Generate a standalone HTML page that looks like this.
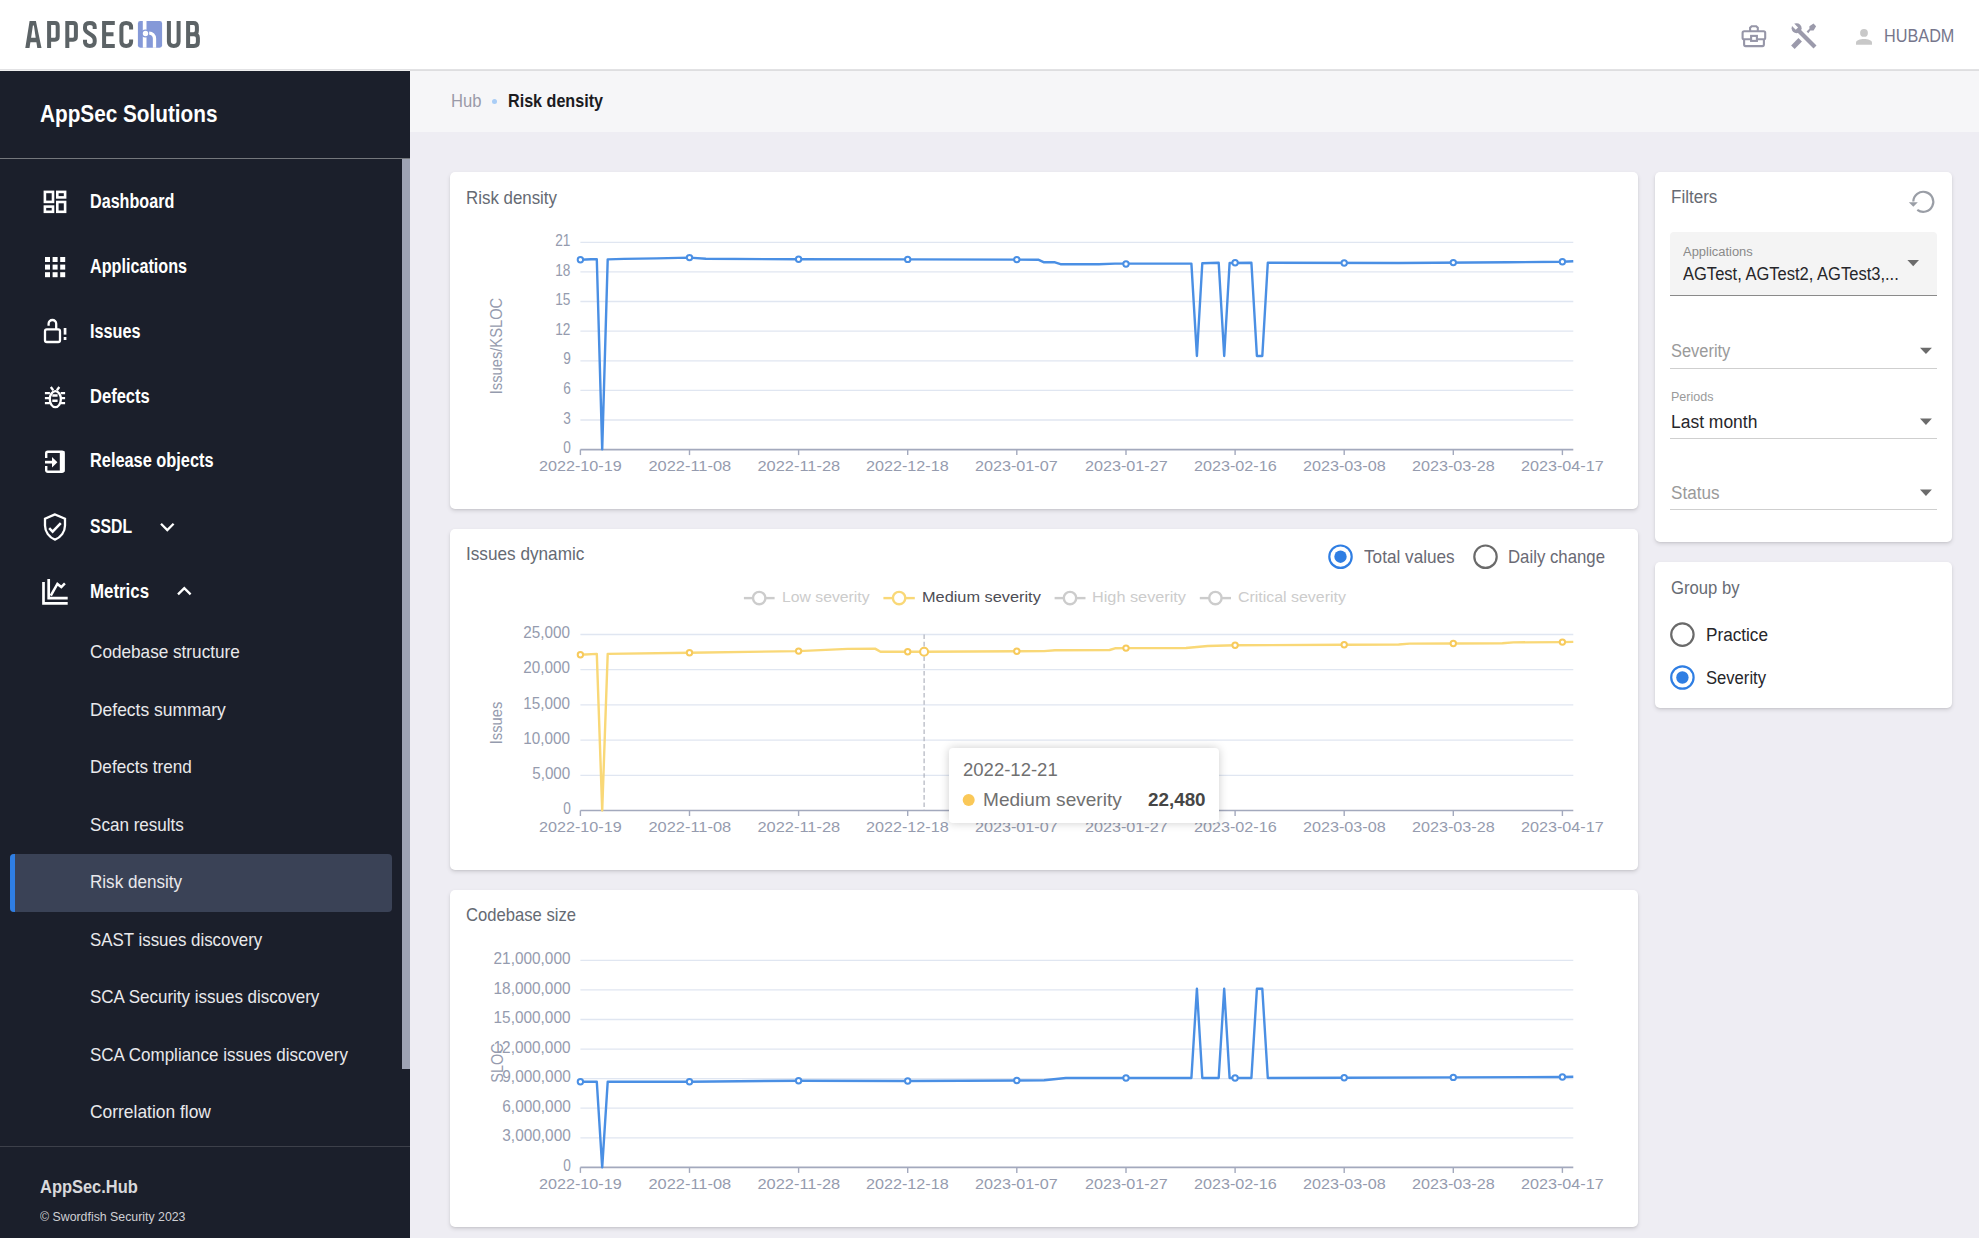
<!DOCTYPE html>
<html><head><meta charset="utf-8"><title>Risk density</title>
<style>
html,body{margin:0;padding:0;width:1979px;height:1238px;overflow:hidden;background:#eeedf3;font-family:"Liberation Sans",sans-serif;}
.abs{position:absolute;}
.t{position:absolute;white-space:pre;line-height:1;font-family:"Liberation Sans",sans-serif;}
#header{position:absolute;left:0;top:0;width:1979px;height:69px;background:#fff;border-bottom:1px solid #e2e2e4;}
#hshadow{position:absolute;left:410px;top:70px;width:1569px;height:1px;background:#dedee0;}
#hshadow2{position:absolute;left:0;top:70px;width:410px;height:1px;background:#efeff0;}
#sidebar{position:absolute;left:0;top:71px;width:410px;height:1167px;background:#1b1f2b;}
#crumb{position:absolute;left:410px;top:71px;width:1569px;height:61px;background:#f6f6f8;}
.card{position:absolute;background:#fff;border-radius:5px;box-shadow:0 2px 4px 0 rgba(0,0,0,.12),0 1px 2px 0 rgba(0,0,0,.06);}
svg{position:absolute;left:0;top:0;overflow:visible;}
</style></head>
<body>
<div id="header"></div>
<div id="hshadow"></div><div id="hshadow2"></div>
<div id="sidebar"></div>
<!-- sidebar header divider -->
<div class="abs" style="left:0;top:158px;width:410px;height:1px;background:#74777c"></div>
<!-- scrollbar -->
<div class="abs" style="left:402px;top:159px;width:8px;height:910px;background:#9ea3b4"></div>
<!-- active item -->
<div class="abs" style="left:10px;top:854px;width:382px;height:58px;background:#3a4256;border-radius:4px;overflow:hidden"><div style="position:absolute;left:0;top:0;width:5px;height:58px;background:#2f7ee3"></div></div>
<!-- footer divider -->
<div class="abs" style="left:0;top:1146px;width:410px;height:1px;background:#3d404a"></div>
<div id="crumb"></div>
<div class="abs" style="left:492px;top:98.8px;width:5.2px;height:5.2px;border-radius:50%;background:#a9cdf6"></div>

<!-- cards -->
<div class="card" style="left:450px;top:172px;width:1188px;height:337px"></div>
<div class="card" style="left:450px;top:529px;width:1188px;height:341px"></div>
<div class="card" style="left:450px;top:890px;width:1188px;height:337px"></div>
<div class="card" style="left:1655px;top:172px;width:297px;height:370px"></div>
<div class="card" style="left:1655px;top:562px;width:297px;height:146px"></div>

<!-- filters inputs -->
<div class="abs" style="left:1670px;top:232px;width:267px;height:63px;background:#f4f4f4;border-radius:4px 4px 0 0;border-bottom:1px solid #8a8a8a"></div>
<div class="abs" style="left:1670px;top:368px;width:267px;height:1px;background:#cfcfcf"></div>
<div class="abs" style="left:1670px;top:438px;width:267px;height:1px;background:#cfcfcf"></div>
<div class="abs" style="left:1670px;top:509px;width:267px;height:1px;background:#cfcfcf"></div>

<svg width="1979" height="1238" viewBox="0 0 1979 1238">
<!-- logo -->
<g fill="none" stroke="#5c6366" stroke-width="4" stroke-linejoin="miter">
  <path d="M49.1,48 V23.1 H55 Q57.7,23.1 57.7,26 V36.6 Q57.7,39.7 55,39.7 H49.1"/>
  <path d="M67.3,48 V23.1 H73.2 Q75.9,23.1 75.9,26 V36.6 Q75.9,39.7 73.2,39.7 H67.3"/>
  <path d="M94.7,29 V27 Q94.7,23.1 89.9,23.1 Q85,23.1 85,27 V28.5 Q85,31 88,32.8 L91.8,35.2 Q94.7,37 94.7,40 V41.8 Q94.7,45.9 89.9,45.9 Q85,45.9 85,41.8 V39.8"/>
  <path d="M114.8,23.1 H104.1 V45.9 H114.8 M104.1,34.3 H113.5"/>
  <path d="M131.1,29.5 V27.5 Q131.1,23.1 126.2,23.1 Q121.4,23.1 121.4,27.5 V41.5 Q121.4,45.9 126.2,45.9 Q131.1,45.9 131.1,41.5 V39.5"/>
  <path d="M168.9,21 V41.5 Q168.9,45.9 173.8,45.9 Q178.6,45.9 178.6,41.5 V21"/>
  <path d="M188.1,48 V23.1 H193.5 Q196.9,23.1 196.9,26.8 V30.5 Q196.9,34.2 193.5,34.2 H188.1 M188.1,34.2 H194 Q197.9,34.2 197.9,38 V42 Q197.9,45.9 194,45.9 H188.1"/>
</g>
<path fill="#5c6366" fill-rule="evenodd" d="M25.3,48 L29.6,21 L35.9,21 L41.5,48 L37.3,48 L36.4,42.3 L30.4,42.3 L29.5,48 Z M31.1,37.8 L35.7,37.8 L33.9,25.6 L32.9,25.6 Z"/>
<rect x="137.9" y="21" width="24.2" height="26.7" rx="2.4" fill="#8599d8"/>
<rect x="142.8" y="21" width="3.7" height="26.7" fill="#fff"/>
<circle cx="145.5" cy="33.5" r="4.1" fill="#8599d8"/>
<circle cx="145.5" cy="33.5" r="2.7" fill="#fff"/>
<path d="M149.2,33.1 A5.3 5.3 0 0 1 154.5,38.4 V47.7" fill="none" stroke="#fff" stroke-width="3.3"/>
<!-- header icons -->
<g fill="none" stroke="#9696a8" stroke-width="2.1">
  <rect x="1742.6" y="31.2" width="22.6" height="8.1" rx="1.6"/>
  <path d="M1744.1 39.3V44.6a1.5 1.5 0 0 0 1.5 1.5H1762.4a1.5 1.5 0 0 0 1.5-1.5V39.3"/>
  <path d="M1750.1 31.2V27.8L1751.7 26.2H1756.2L1757.8 27.8V31.2"/>
  <rect x="1751.1" y="35.9" width="5.8" height="5" fill="#fff"/>
</g>
<g fill="#9b9aab">
  <line x1="1799" y1="31" x2="1815" y2="47" stroke="#9b9aab" stroke-width="4.2"/>
  <circle cx="1796.6" cy="28.3" r="5"/>
  <line x1="1796.9" y1="28.6" x2="1791" y2="22.7" stroke="#fff" stroke-width="3.3"/>
  <line x1="1792.9" y1="47.2" x2="1800.2" y2="39.8" stroke="#9b9aab" stroke-width="4.9"/>
  <path d="M1806.6,31.6 L1809.4,28.8 L1809.4,26.2 L1813.5,23.6 L1816.1,26.2 L1813.6,30.5 L1810.3,30.6 L1808.3,33.3 Z"/>
</g>
<!-- person -->
<circle cx="1864" cy="32.9" r="3.9" fill="#c8c8c8"/>
<path d="M1856 44.8v-2.2c0-2.2 4-3.6 8-3.6s8 1.4 8 3.6v2.2z" fill="#c8c8c8"/>

<!-- sidebar icons -->
<g fill="none" stroke="#fff" stroke-width="2.6">
  <rect x="44.9" y="191.9" width="8.1" height="10" />
  <rect x="57.3" y="191.9" width="7.8" height="5.5" />
  <rect x="44.9" y="206.6" width="8.1" height="5.2" />
  <rect x="57.3" y="202" width="7.8" height="9.8" />
</g>
<g fill="#fff">
  <rect x="45" y="257" width="5" height="5"/><rect x="52.6" y="257" width="5" height="5"/><rect x="60.2" y="257" width="5" height="5"/>
  <rect x="45" y="264.6" width="5" height="5"/><rect x="52.6" y="264.6" width="5" height="5"/><rect x="60.2" y="264.6" width="5" height="5"/>
  <rect x="45" y="272.2" width="5" height="5"/><rect x="52.6" y="272.2" width="5" height="5"/><rect x="60.2" y="272.2" width="5" height="5"/>
</g>
<!-- issues lock -->
<g fill="none" stroke="#fff" stroke-width="2.3">
  <rect x="45" y="329.4" width="15" height="12.6" rx="1.8"/>
  <path d="M48.6 325.8v-2a3.8 3.8 0 0 1 7.6 0v5.6"/>
</g>
<rect x="63.7" y="328" width="2.7" height="6.6" fill="#fff"/>
<rect x="63.7" y="337" width="2.7" height="3" fill="#fff"/>
<!-- bug -->
<g fill="none" stroke="#fff" stroke-width="2.3">
  <ellipse cx="55.35" cy="399.15" rx="5.5" ry="8"/>
  <path d="M44.9 393.1h5M60.7 393.1h4.4M44.9 398.2h5M60.7 398.2h4.4M44.9 403.2h5M60.7 403.2h4.4M50.8 387l2.4 3.2M59.3 387l-2.4 3.2"/>
  <path d="M52.3 395.5h5.3M52.3 400.8h5.3" stroke-width="2.6"/>
</g>
<!-- release objects -->
<g fill="none" stroke="#fff" stroke-width="2.4">
  <path d="M46.2 458.1v-4.7a1.6 1.6 0 0 1 1.6-1.6h14.2a1.6 1.6 0 0 1 1.6 1.6v16.8a1.6 1.6 0 0 1-1.6 1.6H47.8a1.6 1.6 0 0 1-1.6-1.6v-4.3"/>
</g>
<rect x="59.8" y="451" width="4.6" height="21" fill="#fff"/>
<rect x="45" y="460.8" width="8" height="2.7" fill="#fff"/>
<path d="M52 456.9L57.4 462.2L52 467.5Z" fill="#fff"/>
<!-- shield -->
<g fill="none" stroke="#fff" stroke-width="2.3">
  <path d="M55 514.4L45 518.8v6.6c0 6.4 4.2 12.2 10 14.2c5.8-2 10-7.8 10-14.2v-6.6z"/>
  <path d="M49.2 528.2l3.4 3.4l8.2-8.4" stroke-width="2.5"/>
</g>
<!-- metrics -->
<g fill="none" stroke="#fff" stroke-width="2.7">
  <path d="M43.5 582v21.3h24.2"/>
  <path d="M48.7 579.1v19.1h19"/>
  <path d="M50.8 595.6l6.6-11.6l3.9 3.1l3.6-3.7" stroke-width="2.5"/>
</g>
<!-- chevrons -->
<g fill="none" stroke="#fff" stroke-width="2.3">
  <path d="M161 523.8l6.3 6.3l6.3-6.3"/>
  <path d="M178 594.4l6.3-6.3l6.3 6.3"/>
</g>

<!-- filter icons -->
<g fill="none" stroke="#9a9ea6" stroke-width="2.2">
  <path d="M1917.3 209.8A10 10 0 1 0 1913.3 201.5"/>
</g>
<path d="M1908.8 202.3h9l-4.5 4.5z" fill="#9a9ea6"/>
<g fill="#6b6b6b">
  <path d="M1907.4 259.9h11.6l-5.8 6.3z"/>
  <path d="M1920 347.8h11.9l-5.95 6.2z"/>
  <path d="M1920 418.5h11.9l-5.95 6.5z"/>
  <path d="M1920 489.6h11.9l-5.95 6.4z"/>
</g>
<!-- radios -->
<circle cx="1682.4" cy="634.6" r="11.2" fill="none" stroke="#6a6a6a" stroke-width="2.2"/>
<circle cx="1682.4" cy="677.5" r="11.2" fill="none" stroke="#2f7ee3" stroke-width="2.2"/>
<circle cx="1682.4" cy="677.5" r="6.2" fill="#2f7ee3"/>
<circle cx="1340.5" cy="556.7" r="11.2" fill="none" stroke="#2f7ee3" stroke-width="2.2"/>
<circle cx="1340.5" cy="556.7" r="6.2" fill="#2f7ee3"/>
<circle cx="1485.5" cy="556.7" r="11.2" fill="none" stroke="#6a6a6a" stroke-width="2.2"/>

<line x1="580.4" y1="242.3" x2="1573.3" y2="242.3" stroke="#e0e6f1" stroke-width="1.3"/>
<line x1="580.4" y1="271.9" x2="1573.3" y2="271.9" stroke="#e0e6f1" stroke-width="1.3"/>
<line x1="580.4" y1="301.5" x2="1573.3" y2="301.5" stroke="#e0e6f1" stroke-width="1.3"/>
<line x1="580.4" y1="331.1" x2="1573.3" y2="331.1" stroke="#e0e6f1" stroke-width="1.3"/>
<line x1="580.4" y1="360.8" x2="1573.3" y2="360.8" stroke="#e0e6f1" stroke-width="1.3"/>
<line x1="580.4" y1="390.4" x2="1573.3" y2="390.4" stroke="#e0e6f1" stroke-width="1.3"/>
<line x1="580.4" y1="420.0" x2="1573.3" y2="420.0" stroke="#e0e6f1" stroke-width="1.3"/>
<line x1="580.4" y1="449.6" x2="1573.3" y2="449.6" stroke="#a3a9bd" stroke-width="1.6"/>
<line x1="580.4" y1="449.6" x2="580.4" y2="455.1" stroke="#a3a9bd" stroke-width="1.4"/>
<line x1="689.5" y1="449.6" x2="689.5" y2="455.1" stroke="#a3a9bd" stroke-width="1.4"/>
<line x1="798.6" y1="449.6" x2="798.6" y2="455.1" stroke="#a3a9bd" stroke-width="1.4"/>
<line x1="907.7" y1="449.6" x2="907.7" y2="455.1" stroke="#a3a9bd" stroke-width="1.4"/>
<line x1="1016.8" y1="449.6" x2="1016.8" y2="455.1" stroke="#a3a9bd" stroke-width="1.4"/>
<line x1="1126.0" y1="449.6" x2="1126.0" y2="455.1" stroke="#a3a9bd" stroke-width="1.4"/>
<line x1="1235.1" y1="449.6" x2="1235.1" y2="455.1" stroke="#a3a9bd" stroke-width="1.4"/>
<line x1="1344.2" y1="449.6" x2="1344.2" y2="455.1" stroke="#a3a9bd" stroke-width="1.4"/>
<line x1="1453.3" y1="449.6" x2="1453.3" y2="455.1" stroke="#a3a9bd" stroke-width="1.4"/>
<line x1="1562.4" y1="449.6" x2="1562.4" y2="455.1" stroke="#a3a9bd" stroke-width="1.4"/>
<line x1="580.4" y1="634.5" x2="1573.3" y2="634.5" stroke="#e0e6f1" stroke-width="1.3"/>
<line x1="580.4" y1="669.7" x2="1573.3" y2="669.7" stroke="#e0e6f1" stroke-width="1.3"/>
<line x1="580.4" y1="704.9" x2="1573.3" y2="704.9" stroke="#e0e6f1" stroke-width="1.3"/>
<line x1="580.4" y1="740.1" x2="1573.3" y2="740.1" stroke="#e0e6f1" stroke-width="1.3"/>
<line x1="580.4" y1="775.3" x2="1573.3" y2="775.3" stroke="#e0e6f1" stroke-width="1.3"/>
<line x1="580.4" y1="810.5" x2="1573.3" y2="810.5" stroke="#a3a9bd" stroke-width="1.6"/>
<line x1="580.4" y1="810.5" x2="580.4" y2="816.0" stroke="#a3a9bd" stroke-width="1.4"/>
<line x1="689.5" y1="810.5" x2="689.5" y2="816.0" stroke="#a3a9bd" stroke-width="1.4"/>
<line x1="798.6" y1="810.5" x2="798.6" y2="816.0" stroke="#a3a9bd" stroke-width="1.4"/>
<line x1="907.7" y1="810.5" x2="907.7" y2="816.0" stroke="#a3a9bd" stroke-width="1.4"/>
<line x1="1016.8" y1="810.5" x2="1016.8" y2="816.0" stroke="#a3a9bd" stroke-width="1.4"/>
<line x1="1126.0" y1="810.5" x2="1126.0" y2="816.0" stroke="#a3a9bd" stroke-width="1.4"/>
<line x1="1235.1" y1="810.5" x2="1235.1" y2="816.0" stroke="#a3a9bd" stroke-width="1.4"/>
<line x1="1344.2" y1="810.5" x2="1344.2" y2="816.0" stroke="#a3a9bd" stroke-width="1.4"/>
<line x1="1453.3" y1="810.5" x2="1453.3" y2="816.0" stroke="#a3a9bd" stroke-width="1.4"/>
<line x1="1562.4" y1="810.5" x2="1562.4" y2="816.0" stroke="#a3a9bd" stroke-width="1.4"/>
<line x1="580.4" y1="960.3" x2="1573.3" y2="960.3" stroke="#e0e6f1" stroke-width="1.3"/>
<line x1="580.4" y1="989.9" x2="1573.3" y2="989.9" stroke="#e0e6f1" stroke-width="1.3"/>
<line x1="580.4" y1="1019.5" x2="1573.3" y2="1019.5" stroke="#e0e6f1" stroke-width="1.3"/>
<line x1="580.4" y1="1049.1" x2="1573.3" y2="1049.1" stroke="#e0e6f1" stroke-width="1.3"/>
<line x1="580.4" y1="1078.6" x2="1573.3" y2="1078.6" stroke="#e0e6f1" stroke-width="1.3"/>
<line x1="580.4" y1="1108.2" x2="1573.3" y2="1108.2" stroke="#e0e6f1" stroke-width="1.3"/>
<line x1="580.4" y1="1137.8" x2="1573.3" y2="1137.8" stroke="#e0e6f1" stroke-width="1.3"/>
<line x1="580.4" y1="1167.4" x2="1573.3" y2="1167.4" stroke="#a3a9bd" stroke-width="1.6"/>
<line x1="580.4" y1="1167.4" x2="580.4" y2="1172.9" stroke="#a3a9bd" stroke-width="1.4"/>
<line x1="689.5" y1="1167.4" x2="689.5" y2="1172.9" stroke="#a3a9bd" stroke-width="1.4"/>
<line x1="798.6" y1="1167.4" x2="798.6" y2="1172.9" stroke="#a3a9bd" stroke-width="1.4"/>
<line x1="907.7" y1="1167.4" x2="907.7" y2="1172.9" stroke="#a3a9bd" stroke-width="1.4"/>
<line x1="1016.8" y1="1167.4" x2="1016.8" y2="1172.9" stroke="#a3a9bd" stroke-width="1.4"/>
<line x1="1126.0" y1="1167.4" x2="1126.0" y2="1172.9" stroke="#a3a9bd" stroke-width="1.4"/>
<line x1="1235.1" y1="1167.4" x2="1235.1" y2="1172.9" stroke="#a3a9bd" stroke-width="1.4"/>
<line x1="1344.2" y1="1167.4" x2="1344.2" y2="1172.9" stroke="#a3a9bd" stroke-width="1.4"/>
<line x1="1453.3" y1="1167.4" x2="1453.3" y2="1172.9" stroke="#a3a9bd" stroke-width="1.4"/>
<line x1="1562.4" y1="1167.4" x2="1562.4" y2="1172.9" stroke="#a3a9bd" stroke-width="1.4"/>
<polyline points="580.4,259.7 591.3,259.2 596.8,259.2 602.2,449.4 607.7,259.4 624.0,258.9 656.8,258.4 689.5,257.6 705.9,258.8 798.6,259.3 907.7,259.4 1016.8,259.6 1038.7,259.8 1044.1,262.3 1055.0,262.3 1060.5,264.2 1098.7,264.3 1115.0,263.6 1191.4,263.6 1196.9,356.0 1202.3,263.2 1218.7,262.8 1224.2,356.0 1229.6,263.0 1251.4,262.8 1256.9,356.0 1262.3,356.0 1267.8,262.8 1398.7,263.0 1507.8,262.3 1562.4,261.8 1573.3,261.2" fill="none" stroke="#4a8fe4" stroke-width="2.4" stroke-linejoin="round"/>
<circle cx="580.4" cy="259.7" r="2.7" fill="#fff" stroke="#4a8fe4" stroke-width="2"/>
<circle cx="689.5" cy="257.6" r="2.7" fill="#fff" stroke="#4a8fe4" stroke-width="2"/>
<circle cx="798.6" cy="259.3" r="2.7" fill="#fff" stroke="#4a8fe4" stroke-width="2"/>
<circle cx="907.7" cy="259.4" r="2.7" fill="#fff" stroke="#4a8fe4" stroke-width="2"/>
<circle cx="1016.8" cy="259.6" r="2.7" fill="#fff" stroke="#4a8fe4" stroke-width="2"/>
<circle cx="1126.0" cy="264.0" r="2.7" fill="#fff" stroke="#4a8fe4" stroke-width="2"/>
<circle cx="1235.1" cy="262.8" r="2.7" fill="#fff" stroke="#4a8fe4" stroke-width="2"/>
<circle cx="1344.2" cy="263.0" r="2.7" fill="#fff" stroke="#4a8fe4" stroke-width="2"/>
<circle cx="1453.3" cy="262.6" r="2.7" fill="#fff" stroke="#4a8fe4" stroke-width="2"/>
<circle cx="1562.4" cy="261.8" r="2.7" fill="#fff" stroke="#4a8fe4" stroke-width="2"/>
<polyline points="580.4,654.8 596.8,653.9 602.2,810.5 607.7,653.9 689.5,652.7 798.6,651.1 847.7,648.9 875.0,648.6 880.5,651.8 907.7,651.8 924.1,651.8 1016.8,651.2 1044.1,651.1 1055.0,650.2 1109.6,650.0 1115.0,648.3 1126.0,648.1 1186.0,648.0 1202.3,646.5 1207.8,646.0 1235.1,645.3 1344.2,644.7 1398.7,644.5 1409.6,643.6 1453.3,643.5 1502.4,643.3 1513.3,642.4 1562.4,642.1 1573.3,641.9" fill="none" stroke="#f9d877" stroke-width="2.4" stroke-linejoin="round"/>
<circle cx="580.4" cy="654.8" r="2.7" fill="#fff" stroke="#f7ca5c" stroke-width="2"/>
<circle cx="689.5" cy="652.7" r="2.7" fill="#fff" stroke="#f7ca5c" stroke-width="2"/>
<circle cx="798.6" cy="651.1" r="2.7" fill="#fff" stroke="#f7ca5c" stroke-width="2"/>
<circle cx="907.7" cy="651.8" r="2.7" fill="#fff" stroke="#f7ca5c" stroke-width="2"/>
<circle cx="1016.8" cy="651.2" r="2.7" fill="#fff" stroke="#f7ca5c" stroke-width="2"/>
<circle cx="1126.0" cy="648.1" r="2.7" fill="#fff" stroke="#f7ca5c" stroke-width="2"/>
<circle cx="1235.1" cy="645.3" r="2.7" fill="#fff" stroke="#f7ca5c" stroke-width="2"/>
<circle cx="1344.2" cy="644.7" r="2.7" fill="#fff" stroke="#f7ca5c" stroke-width="2"/>
<circle cx="1453.3" cy="643.5" r="2.7" fill="#fff" stroke="#f7ca5c" stroke-width="2"/>
<circle cx="1562.4" cy="642.1" r="2.7" fill="#fff" stroke="#f7ca5c" stroke-width="2"/>
<line x1="924.1" y1="634.5" x2="924.1" y2="810.5" stroke="#a9adb9" stroke-width="1.1" stroke-dasharray="4.6,2.7"/>
<circle cx="924.1" cy="651.8" r="4" fill="#fff" stroke="#f7ca5c" stroke-width="2.1"/>
<polyline points="580.4,1081.8 596.8,1081.8 602.2,1167.4 607.7,1081.8 689.5,1081.8 798.6,1080.7 907.7,1081.0 1016.8,1080.5 1044.1,1080.2 1065.9,1078.0 1126.0,1078.0 1191.4,1078.0 1196.9,988.8 1202.3,1078.0 1218.7,1078.0 1224.2,988.8 1229.6,1078.0 1251.4,1078.0 1256.9,988.8 1262.3,988.8 1267.8,1078.0 1344.2,1077.8 1453.3,1077.4 1562.4,1077.0 1573.3,1076.8" fill="none" stroke="#4a8fe4" stroke-width="2.4" stroke-linejoin="round"/>
<circle cx="580.4" cy="1081.8" r="2.7" fill="#fff" stroke="#4a8fe4" stroke-width="2"/>
<circle cx="689.5" cy="1081.8" r="2.7" fill="#fff" stroke="#4a8fe4" stroke-width="2"/>
<circle cx="798.6" cy="1080.7" r="2.7" fill="#fff" stroke="#4a8fe4" stroke-width="2"/>
<circle cx="907.7" cy="1081.0" r="2.7" fill="#fff" stroke="#4a8fe4" stroke-width="2"/>
<circle cx="1016.8" cy="1080.5" r="2.7" fill="#fff" stroke="#4a8fe4" stroke-width="2"/>
<circle cx="1126.0" cy="1078.0" r="2.7" fill="#fff" stroke="#4a8fe4" stroke-width="2"/>
<circle cx="1235.1" cy="1078.0" r="2.7" fill="#fff" stroke="#4a8fe4" stroke-width="2"/>
<circle cx="1344.2" cy="1077.8" r="2.7" fill="#fff" stroke="#4a8fe4" stroke-width="2"/>
<circle cx="1453.3" cy="1077.4" r="2.7" fill="#fff" stroke="#4a8fe4" stroke-width="2"/>
<circle cx="1562.4" cy="1077.0" r="2.7" fill="#fff" stroke="#4a8fe4" stroke-width="2"/>
<line x1="743.9" y1="598.1" x2="774.6" y2="598.1" stroke="#cccccc" stroke-width="2.4"/>
<circle cx="759.2" cy="598.1" r="6.2" fill="#fff" stroke="#cccccc" stroke-width="2.4"/>
<line x1="883.4" y1="598.1" x2="914.8" y2="598.1" stroke="#f9d877" stroke-width="2.4"/>
<circle cx="899.1" cy="598.1" r="6.2" fill="#fff" stroke="#f9d877" stroke-width="2.4"/>
<line x1="1054.6" y1="598.1" x2="1085.5" y2="598.1" stroke="#cccccc" stroke-width="2.4"/>
<circle cx="1070.0" cy="598.1" r="6.2" fill="#fff" stroke="#cccccc" stroke-width="2.4"/>
<line x1="1199.8" y1="598.1" x2="1231" y2="598.1" stroke="#cccccc" stroke-width="2.4"/>
<circle cx="1215.4" cy="598.1" r="6.2" fill="#fff" stroke="#cccccc" stroke-width="2.4"/>
</svg>
<span class='t' style='left:1883.80px;top:26.76px;font-size:18px;font-weight:400;color:#76768c;transform-origin:0 0;transform:scaleX(0.9024)'>HUBADM</span><span class='t' style='left:40.00px;top:101.78px;font-size:24px;font-weight:700;color:#ffffff;transform-origin:0 0;transform:scaleX(0.8643)'>AppSec Solutions</span><span class='t' style='left:90.40px;top:191.17px;font-size:20px;font-weight:700;color:#ffffff;transform-origin:0 0;transform:scaleX(0.8069)'>Dashboard</span><span class='t' style='left:90.40px;top:255.87px;font-size:20px;font-weight:700;color:#ffffff;transform-origin:0 0;transform:scaleX(0.8082)'>Applications</span><span class='t' style='left:90.40px;top:321.27px;font-size:20px;font-weight:700;color:#ffffff;transform-origin:0 0;transform:scaleX(0.8126)'>Issues</span><span class='t' style='left:90.40px;top:385.77px;font-size:20px;font-weight:700;color:#ffffff;transform-origin:0 0;transform:scaleX(0.8275)'>Defects</span><span class='t' style='left:90.40px;top:450.37px;font-size:20px;font-weight:700;color:#ffffff;transform-origin:0 0;transform:scaleX(0.8174)'>Release objects</span><span class='t' style='left:90.40px;top:515.87px;font-size:20px;font-weight:700;color:#ffffff;transform-origin:0 0;transform:scaleX(0.7873)'>SSDL</span><span class='t' style='left:90.40px;top:580.87px;font-size:20px;font-weight:700;color:#ffffff;transform-origin:0 0;transform:scaleX(0.8425)'>Metrics</span><span class='t' style='left:90.30px;top:643.24px;font-size:18.5px;font-weight:400;color:#e9e9ec;transform-origin:0 0;transform:scaleX(0.9278)'>Codebase structure</span><span class='t' style='left:90.30px;top:700.74px;font-size:18.5px;font-weight:400;color:#e9e9ec;transform-origin:0 0;transform:scaleX(0.9429)'>Defects summary</span><span class='t' style='left:90.30px;top:758.24px;font-size:18.5px;font-weight:400;color:#e9e9ec;transform-origin:0 0;transform:scaleX(0.9252)'>Defects trend</span><span class='t' style='left:90.30px;top:815.74px;font-size:18.5px;font-weight:400;color:#e9e9ec;transform-origin:0 0;transform:scaleX(0.9224)'>Scan results</span><span class='t' style='left:90.30px;top:873.24px;font-size:18.5px;font-weight:400;color:#e9e9ec;transform-origin:0 0;transform:scaleX(0.9225)'>Risk density</span><span class='t' style='left:90.30px;top:930.74px;font-size:18.5px;font-weight:400;color:#e9e9ec;transform-origin:0 0;transform:scaleX(0.9124)'>SAST issues discovery</span><span class='t' style='left:90.30px;top:988.24px;font-size:18.5px;font-weight:400;color:#e9e9ec;transform-origin:0 0;transform:scaleX(0.9178)'>SCA Security issues discovery</span><span class='t' style='left:90.30px;top:1045.74px;font-size:18.5px;font-weight:400;color:#e9e9ec;transform-origin:0 0;transform:scaleX(0.9191)'>SCA Compliance issues discovery</span><span class='t' style='left:90.30px;top:1103.24px;font-size:18.5px;font-weight:400;color:#e9e9ec;transform-origin:0 0;transform:scaleX(0.9406)'>Correlation flow</span><span class='t' style='left:40.10px;top:1178.24px;font-size:18.5px;font-weight:700;color:#d9d9dc;transform-origin:0 0;transform:scaleX(0.8892)'>AppSec.Hub</span><span class='t' style='left:40.10px;top:1211.02px;font-size:12.5px;font-weight:400;color:#d0d0d4;transform-origin:0 0;transform:scaleX(0.9865)'>© Swordfish Security 2023</span><span class='t' style='left:450.90px;top:91.02px;font-size:19px;font-weight:400;color:#9a9aa8;transform-origin:0 0;transform:scaleX(0.8749)'>Hub</span><span class='t' style='left:507.70px;top:91.02px;font-size:19px;font-weight:700;color:#1b1b1f;transform-origin:0 0;transform:scaleX(0.8487)'>Risk density</span><span class='t' style='left:465.90px;top:187.92px;font-size:19px;font-weight:400;color:#656a73;transform-origin:0 0;transform:scaleX(0.8885)'>Risk density</span><span class='t' style='left:465.90px;top:544.22px;font-size:19px;font-weight:400;color:#656a73;transform-origin:0 0;transform:scaleX(0.9041)'>Issues dynamic</span><span class='t' style='left:465.90px;top:905.42px;font-size:19px;font-weight:400;color:#656a73;transform-origin:0 0;transform:scaleX(0.8751)'>Codebase size</span><span class='t' style='left:1670.60px;top:188.46px;font-size:18px;font-weight:400;color:#676b73;transform-origin:0 0;transform:scaleX(0.9449)'>Filters</span><span class='t' style='left:1683.40px;top:245.92px;font-size:12.5px;font-weight:400;color:#8a8a8a;transform-origin:0 0;transform:scaleX(1.0355)'>Applications</span><span class='t' style='left:1683.40px;top:264.76px;font-size:18px;font-weight:400;color:#26262a;transform-origin:0 0;transform:scaleX(0.9179)'>AGTest, AGTest2, AGTest3,...</span><span class='t' style='left:1670.50px;top:341.96px;font-size:18px;font-weight:400;color:#9a9a9a;transform-origin:0 0;transform:scaleX(0.9119)'>Severity</span><span class='t' style='left:1670.50px;top:391.02px;font-size:12.5px;font-weight:400;color:#9a9a9a;transform-origin:0 0;transform:scaleX(1.0026)'>Periods</span><span class='t' style='left:1670.50px;top:412.56px;font-size:18px;font-weight:400;color:#26262a;transform-origin:0 0;transform:scaleX(0.9701)'>Last month</span><span class='t' style='left:1670.50px;top:483.76px;font-size:18px;font-weight:400;color:#9a9a9a;transform-origin:0 0;transform:scaleX(0.9504)'>Status</span><span class='t' style='left:1670.50px;top:578.84px;font-size:18.5px;font-weight:400;color:#676b73;transform-origin:0 0;transform:scaleX(0.9000)'>Group by</span><span class='t' style='left:1705.60px;top:625.76px;font-size:18px;font-weight:400;color:#26262a;transform-origin:0 0;transform:scaleX(0.9534)'>Practice</span><span class='t' style='left:1705.60px;top:668.66px;font-size:18px;font-weight:400;color:#26262a;transform-origin:0 0;transform:scaleX(0.9226)'>Severity</span><span class='t' style='left:1363.80px;top:547.32px;font-size:19px;font-weight:400;color:#6a6a74;transform-origin:0 0;transform:scaleX(0.9039)'>Total values</span><span class='t' style='left:1507.90px;top:547.32px;font-size:19px;font-weight:400;color:#6a6a74;transform-origin:0 0;transform:scaleX(0.8831)'>Daily change</span><span class='t' style='left:781.90px;top:588.68px;font-size:15.5px;font-weight:400;color:#cccccc;transform-origin:0 0;transform:scaleX(1.0168)'>Low severity</span><span class='t' style='left:921.80px;top:588.68px;font-size:15.5px;font-weight:400;color:#4d4d55;transform-origin:0 0;transform:scaleX(1.0528)'>Medium severity</span><span class='t' style='left:1092.00px;top:588.68px;font-size:15.5px;font-weight:400;color:#cccccc;transform-origin:0 0;transform:scaleX(1.0492)'>High severity</span><span class='t' style='left:1237.70px;top:588.68px;font-size:15.5px;font-weight:400;color:#cccccc;transform-origin:0 0;transform:scaleX(1.0269)'>Critical severity</span><span class='t' style='left:542.03px;top:457.90px;font-size:15px;font-weight:400;color:#959bae;transform-origin:38.37px 0;transform:scaleX(1.0777)'>2022-10-19</span><span class='t' style='left:651.70px;top:457.90px;font-size:15px;font-weight:400;color:#959bae;transform-origin:37.81px 0;transform:scaleX(1.0936)'>2022-11-08</span><span class='t' style='left:760.81px;top:457.90px;font-size:15px;font-weight:400;color:#959bae;transform-origin:37.81px 0;transform:scaleX(1.0936)'>2022-11-28</span><span class='t' style='left:869.37px;top:457.90px;font-size:15px;font-weight:400;color:#959bae;transform-origin:38.37px 0;transform:scaleX(1.0777)'>2022-12-18</span><span class='t' style='left:978.48px;top:457.90px;font-size:15px;font-weight:400;color:#959bae;transform-origin:38.37px 0;transform:scaleX(1.0777)'>2023-01-07</span><span class='t' style='left:1087.59px;top:457.90px;font-size:15px;font-weight:400;color:#959bae;transform-origin:38.37px 0;transform:scaleX(1.0777)'>2023-01-27</span><span class='t' style='left:1196.70px;top:457.90px;font-size:15px;font-weight:400;color:#959bae;transform-origin:38.37px 0;transform:scaleX(1.0777)'>2023-02-16</span><span class='t' style='left:1305.81px;top:457.90px;font-size:15px;font-weight:400;color:#959bae;transform-origin:38.37px 0;transform:scaleX(1.0777)'>2023-03-08</span><span class='t' style='left:1414.92px;top:457.90px;font-size:15px;font-weight:400;color:#959bae;transform-origin:38.37px 0;transform:scaleX(1.0777)'>2023-03-28</span><span class='t' style='left:1524.03px;top:457.90px;font-size:15px;font-weight:400;color:#959bae;transform-origin:38.37px 0;transform:scaleX(1.0777)'>2023-04-17</span><span class='t' style='left:552.95px;top:232.91px;font-size:15.7px;font-weight:400;color:#959bae;transform-origin:17.45px 0;transform:scaleX(0.8709)'>21</span><span class='t' style='left:552.95px;top:262.52px;font-size:15.7px;font-weight:400;color:#959bae;transform-origin:17.45px 0;transform:scaleX(0.8709)'>18</span><span class='t' style='left:552.95px;top:292.14px;font-size:15.7px;font-weight:400;color:#959bae;transform-origin:17.45px 0;transform:scaleX(0.8709)'>15</span><span class='t' style='left:552.95px;top:321.75px;font-size:15.7px;font-weight:400;color:#959bae;transform-origin:17.45px 0;transform:scaleX(0.8709)'>12</span><span class='t' style='left:561.67px;top:351.37px;font-size:15.7px;font-weight:400;color:#959bae;transform-origin:8.73px 0;transform:scaleX(0.8701)'>9</span><span class='t' style='left:561.67px;top:380.98px;font-size:15.7px;font-weight:400;color:#959bae;transform-origin:8.73px 0;transform:scaleX(0.8701)'>6</span><span class='t' style='left:561.67px;top:410.60px;font-size:15.7px;font-weight:400;color:#959bae;transform-origin:8.73px 0;transform:scaleX(0.8701)'>3</span><span class='t' style='left:561.67px;top:440.21px;font-size:15.7px;font-weight:400;color:#959bae;transform-origin:8.73px 0;transform:scaleX(0.8701)'>0</span><span class='t' style='left:444.93px;top:337.50px;font-size:16px;font-weight:400;color:#959bae;transform-origin:52.47px 8.00px;transform:rotate(-90deg) scaleX(0.9196)'>Issues/KSLOC</span><span class='t' style='left:542.03px;top:818.80px;font-size:15px;font-weight:400;color:#959bae;transform-origin:38.37px 0;transform:scaleX(1.0777)'>2022-10-19</span><span class='t' style='left:651.70px;top:818.80px;font-size:15px;font-weight:400;color:#959bae;transform-origin:37.81px 0;transform:scaleX(1.0936)'>2022-11-08</span><span class='t' style='left:760.81px;top:818.80px;font-size:15px;font-weight:400;color:#959bae;transform-origin:37.81px 0;transform:scaleX(1.0936)'>2022-11-28</span><span class='t' style='left:869.37px;top:818.80px;font-size:15px;font-weight:400;color:#959bae;transform-origin:38.37px 0;transform:scaleX(1.0777)'>2022-12-18</span><span class='t' style='left:978.48px;top:818.80px;font-size:15px;font-weight:400;color:#959bae;transform-origin:38.37px 0;transform:scaleX(1.0777)'>2023-01-07</span><span class='t' style='left:1087.59px;top:818.80px;font-size:15px;font-weight:400;color:#959bae;transform-origin:38.37px 0;transform:scaleX(1.0777)'>2023-01-27</span><span class='t' style='left:1196.70px;top:818.80px;font-size:15px;font-weight:400;color:#959bae;transform-origin:38.37px 0;transform:scaleX(1.0777)'>2023-02-16</span><span class='t' style='left:1305.81px;top:818.80px;font-size:15px;font-weight:400;color:#959bae;transform-origin:38.37px 0;transform:scaleX(1.0777)'>2023-03-08</span><span class='t' style='left:1414.92px;top:818.80px;font-size:15px;font-weight:400;color:#959bae;transform-origin:38.37px 0;transform:scaleX(1.0777)'>2023-03-28</span><span class='t' style='left:1524.03px;top:818.80px;font-size:15px;font-weight:400;color:#959bae;transform-origin:38.37px 0;transform:scaleX(1.0777)'>2023-04-17</span><span class='t' style='left:522.42px;top:625.11px;font-size:15.7px;font-weight:400;color:#959bae;transform-origin:47.98px 0;transform:scaleX(0.9732)'>25,000</span><span class='t' style='left:522.42px;top:660.31px;font-size:15.7px;font-weight:400;color:#959bae;transform-origin:47.98px 0;transform:scaleX(0.9732)'>20,000</span><span class='t' style='left:522.42px;top:695.51px;font-size:15.7px;font-weight:400;color:#959bae;transform-origin:47.98px 0;transform:scaleX(0.9732)'>15,000</span><span class='t' style='left:522.42px;top:730.71px;font-size:15.7px;font-weight:400;color:#959bae;transform-origin:47.98px 0;transform:scaleX(0.9732)'>10,000</span><span class='t' style='left:531.13px;top:765.91px;font-size:15.7px;font-weight:400;color:#959bae;transform-origin:39.27px 0;transform:scaleX(0.9678)'>5,000</span><span class='t' style='left:561.67px;top:801.11px;font-size:15.7px;font-weight:400;color:#959bae;transform-origin:8.73px 0;transform:scaleX(0.8701)'>0</span><span class='t' style='left:474.27px;top:714.50px;font-size:16px;font-weight:400;color:#959bae;transform-origin:23.12px 8.00px;transform:rotate(-90deg) scaleX(0.9189)'>Issues</span><span class='t' style='left:542.03px;top:1175.70px;font-size:15px;font-weight:400;color:#959bae;transform-origin:38.37px 0;transform:scaleX(1.0777)'>2022-10-19</span><span class='t' style='left:651.70px;top:1175.70px;font-size:15px;font-weight:400;color:#959bae;transform-origin:37.81px 0;transform:scaleX(1.0936)'>2022-11-08</span><span class='t' style='left:760.81px;top:1175.70px;font-size:15px;font-weight:400;color:#959bae;transform-origin:37.81px 0;transform:scaleX(1.0936)'>2022-11-28</span><span class='t' style='left:869.37px;top:1175.70px;font-size:15px;font-weight:400;color:#959bae;transform-origin:38.37px 0;transform:scaleX(1.0777)'>2022-12-18</span><span class='t' style='left:978.48px;top:1175.70px;font-size:15px;font-weight:400;color:#959bae;transform-origin:38.37px 0;transform:scaleX(1.0777)'>2023-01-07</span><span class='t' style='left:1087.59px;top:1175.70px;font-size:15px;font-weight:400;color:#959bae;transform-origin:38.37px 0;transform:scaleX(1.0777)'>2023-01-27</span><span class='t' style='left:1196.70px;top:1175.70px;font-size:15px;font-weight:400;color:#959bae;transform-origin:38.37px 0;transform:scaleX(1.0777)'>2023-02-16</span><span class='t' style='left:1305.81px;top:1175.70px;font-size:15px;font-weight:400;color:#959bae;transform-origin:38.37px 0;transform:scaleX(1.0777)'>2023-03-08</span><span class='t' style='left:1414.92px;top:1175.70px;font-size:15px;font-weight:400;color:#959bae;transform-origin:38.37px 0;transform:scaleX(1.0777)'>2023-03-28</span><span class='t' style='left:1524.03px;top:1175.70px;font-size:15px;font-weight:400;color:#959bae;transform-origin:38.37px 0;transform:scaleX(1.0777)'>2023-04-17</span><span class='t' style='left:491.88px;top:950.91px;font-size:15.7px;font-weight:400;color:#959bae;transform-origin:78.52px 0;transform:scaleX(0.9807)'>21,000,000</span><span class='t' style='left:491.88px;top:980.50px;font-size:15.7px;font-weight:400;color:#959bae;transform-origin:78.52px 0;transform:scaleX(0.9807)'>18,000,000</span><span class='t' style='left:491.88px;top:1010.08px;font-size:15.7px;font-weight:400;color:#959bae;transform-origin:78.52px 0;transform:scaleX(0.9807)'>15,000,000</span><span class='t' style='left:491.88px;top:1039.67px;font-size:15.7px;font-weight:400;color:#959bae;transform-origin:78.52px 0;transform:scaleX(0.9807)'>12,000,000</span><span class='t' style='left:500.60px;top:1069.25px;font-size:15.7px;font-weight:400;color:#959bae;transform-origin:69.80px 0;transform:scaleX(0.9814)'>9,000,000</span><span class='t' style='left:500.60px;top:1098.84px;font-size:15.7px;font-weight:400;color:#959bae;transform-origin:69.80px 0;transform:scaleX(0.9814)'>6,000,000</span><span class='t' style='left:500.60px;top:1128.42px;font-size:15.7px;font-weight:400;color:#959bae;transform-origin:69.80px 0;transform:scaleX(0.9814)'>3,000,000</span><span class='t' style='left:561.67px;top:1158.01px;font-size:15.7px;font-weight:400;color:#959bae;transform-origin:8.73px 0;transform:scaleX(0.8701)'>0</span><span class='t' style='left:475.61px;top:1054.70px;font-size:16px;font-weight:400;color:#959bae;transform-origin:21.79px 8.00px;transform:rotate(-90deg) scaleX(0.9064)'>SLOC</span>
<div class="abs" style="left:949px;top:747.5px;width:270px;height:75px;background:#fff;border-radius:4px;box-shadow:0 0 10px rgba(0,0,0,.2)"></div>
<svg width="1979" height="1238"><circle cx="968.7" cy="799.9" r="6" fill="#fac858"/></svg>
<span class='t' style='left:962.60px;top:759.82px;font-size:19px;font-weight:400;color:#707070;transform-origin:0 0;transform:scaleX(0.9742)'>2022-12-21</span><span class='t' style='left:983.00px;top:789.92px;font-size:19px;font-weight:400;color:#707070;transform-origin:0 0;transform:scaleX(1.0034)'>Medium severity</span><span class='t' style='left:1147.50px;top:789.92px;font-size:19px;font-weight:700;color:#464646;transform-origin:0 0;transform:scaleX(0.9910)'>22,480</span>
</body></html>
